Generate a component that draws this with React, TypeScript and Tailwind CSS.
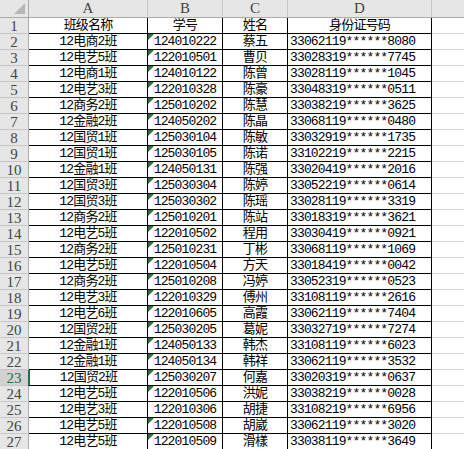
import React from 'react';

const rows: [string, string, string, string, boolean][] = [
  ['12电商2班', '124010222', '蔡五', '33062119******8080', true],
  ['12电艺5班', '122010501', '曹贝', '33028319******7745', true],
  ['12电商1班', '124010122', '陈曾', '33028119******1045', true],
  ['12电艺3班', '122010328', '陈豪', '33048319******0511', true],
  ['12商务2班', '125010202', '陈慧', '33038219******3625', true],
  ['12金融2班', '124050202', '陈晶', '33068119******0480', true],
  ['12国贸1班', '125030104', '陈敏', '33032919******1735', true],
  ['12国贸1班', '125030105', '陈诺', '33102219******2215', true],
  ['12金融1班', '124050131', '陈强', '33020419******2016', true],
  ['12国贸3班', '125030304', '陈婷', '33052219******0614', true],
  ['12国贸3班', '125030302', '陈瑶', '33028119******3319', true],
  ['12商务2班', '125010201', '陈站', '33018319******3621', true],
  ['12电艺5班', '122010502', '程用', '33030419******0921', true],
  ['12商务2班', '125010231', '丁彬', '33068119******1069', true],
  ['12电艺5班', '122010504', '方天', '33018419******0042', true],
  ['12商务2班', '125010208', '冯婷', '33052319******0523', true],
  ['12电艺3班', '122010329', '傅州', '33108119******2616', true],
  ['12电艺6班', '122010605', '高霞', '33062119******7404', true],
  ['12国贸2班', '125030205', '葛妮', '33032719******7274', true],
  ['12金融1班', '124050133', '韩杰', '33108119******6023', true],
  ['12金融1班', '124050134', '韩祥', '33062119******3532', true],
  ['12国贸2班', '125030207', '何嘉', '33020319******0637', true],
  ['12电艺5班', '122010506', '洪妮', '33038219******0028', true],
  ['12电艺3班', '122010306', '胡捷', '33108219******6956', false],
  ['12电艺5班', '122010508', '胡崴', '33062119******3020', true],
  ['12电艺5班', '122010509', '滑樣', '33038119******3649', true],
];

const cellFont = {
  fontFamily: '"Liberation Mono", "Noto Sans CJK SC", monospace',
};

const grid = 'grid grid-cols-[29px_119px_75px_65px_144px_1fr]';
const dataCell =
  'h-[16px] border-r border-b border-black text-[13px] tracking-[-0.85px] leading-[16px] text-black whitespace-nowrap overflow-hidden';

const Triangle = () => (
  <span className="absolute left-0 top-0 w-0 h-0 border-t-[6px] border-r-[6px] border-t-[#217346] border-r-transparent" />
);

const App = () => {
  return (
    <div className="w-[464px] h-[449px] overflow-hidden bg-white" style={cellFont}>
      {/* column headers */}
      <div className={`${grid} h-[18px] bg-[#e6e6e6] border-b border-[#ababab] text-[#444] font-['Liberation_Serif',serif] text-[15px] leading-[17px]`}>
        <div className="relative border-r border-[#ababab]">
          <svg className="absolute right-[3px] bottom-[3px]" width="11" height="11" viewBox="0 0 11 11">
            <polygon points="11,0 11,11 0,11" fill="#b7b7b7" />
          </svg>
        </div>
        {['A', 'B', 'C', 'D', 'E'].map((c) => (
          <div
            key={c}
            className={`border-r border-[#c6c6c6] ${c === 'E' ? 'text-right pr-[0px] -mr-[5px]' : 'text-center'}`}
          >
            {c === 'E' ? <span className="inline-block w-[32px] text-right pr-[0px] mr-[-6px]">E</span> : c}
          </div>
        ))}
      </div>

      {/* header row */}
      <div className={grid}>
        <RowNum n={1} />
        <div className={`${dataCell} text-center`}>班级名称</div>
        <div className={`${dataCell} text-center`}>学号</div>
        <div className={`${dataCell} text-center`}>姓名</div>
        <div className={`${dataCell} text-center`}>身份证号码</div>
        <div className="h-[16px] border-b border-[#d9d9d9]" />
      </div>

      {rows.map(([cls, id, name, card, tri], i) => (
        <div key={i} className={grid}>
          <RowNum n={i + 2} active={i + 2 === 23} />
          <div className={`${dataCell} text-center ${i + 2 === 23 ? 'border-l-2 border-l-[#217346] -ml-[1px]' : ''}`}>
            {cls}
          </div>
          <div className={`${dataCell} relative text-center`}>
            {tri && <Triangle />}
            {id}
          </div>
          <div className={`${dataCell} text-center`}>{name}</div>
          <div className={`${dataCell} pl-[2px]`}>{card}</div>
          <div className="h-[16px] border-b border-[#d9d9d9]" />
        </div>
      ))}
    </div>
  );
};

const RowNum = ({ n, active }: { n: number; active?: boolean }) => (
  <div
    className={`h-[16px] border-r border-b text-center text-[15px] leading-[16px] font-['Liberation_Serif',serif] ${
      active ? 'bg-[#d2d2d2] text-[#217346] border-r-[#217346] border-b-[#c6c6c6]' : 'bg-[#e6e6e6] text-[#444] border-r-[#ababab] border-b-[#c6c6c6]'
    }`}
  >
    {n}
  </div>
);

export default App;
